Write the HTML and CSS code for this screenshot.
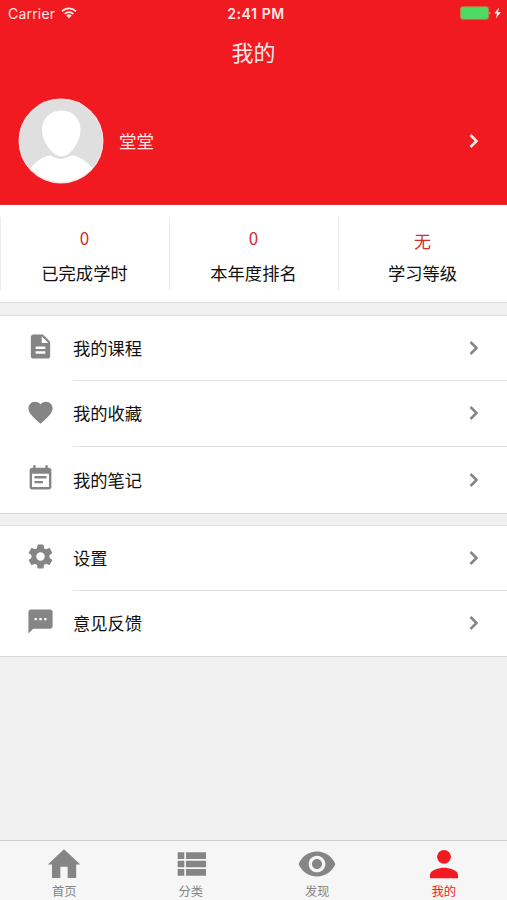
FILE: index.html
```html
<!DOCTYPE html>
<html lang="zh-CN">
<head>
<meta charset="utf-8">
<title>我的</title>
<link rel="stylesheet" href="styles.css">
</head>
<body>
<header class="header">
  <div class="status">
    <div class="carrier"><span>Carrier</span>
      <svg class="wifi" viewBox="0 0 16 12"><g fill="none" stroke="currentColor" stroke-width="1.7"><path d="M1 4.300a10 10 0 0 1 14 0"/><path d="M3.600 7a6.200 6.200 0 0 1 8.800 0"/></g><path d="M5.300 8.600a3.800 3.800 0 0 1 5.400 0L8 11.400z" fill="currentColor"/></svg>
    </div>
    <div class="time">2:41 PM</div>
    <svg class="battery" viewBox="0 0 42 14"><rect x=".5" y=".8" width="28" height="12.4" rx="2" fill="#4cd964" stroke="#b98a45" stroke-width=".8"/><path d="M29.600 5q1.800 2 0 4z" fill="#fbd0d0"/><path d="M39 1.500l-4.600 6h2.700l-1.300 5 5-6.300h-2.900z" fill="#fff"/></svg>
  </div>
  <h1 class="title">我的</h1>
  <div class="profile">
    <svg class="avatar" viewBox="0 0 86 86"><defs><clipPath id="disc"><circle cx="43" cy="43" r="42"/></clipPath></defs><circle cx="43" cy="43" r="42" fill="#dfdfdf"/><g clip-path="url(#disc)" fill="#fff"><path d="M8 75C16 66 23 58 34 57Q43 65 52 57C64 58 71 66 79 75V86H8z"/><path d="M43.500 12.500C55 12.500 62.500 21 62.500 32C62.500 44 52 58.500 43.500 58.500C35 58.500 24 44 24 32C24 21 32 12.500 43.500 12.500z"/></g><path d="M33 56.500Q43 63.500 53 56.500" fill="none" stroke="#dfdfdf" stroke-width="1.800"/><circle cx="43" cy="43" r="41.800" fill="none" stroke="#fbe3e3" stroke-width="1.300"/></svg>
    <span class="name">堂堂</span>
    <svg class="arrow" viewBox="0 0 10 16"><path d="M1.500 2l6 6-6 6"/></svg>
  </div>
</header>
<section class="stats">
  <div class="stat"><span class="value">0</span><span class="label">已完成学时</span></div>
  <div class="stat"><span class="value">0</span><span class="label">本年度排名</span></div>
  <div class="stat"><span class="value word">无</span><span class="label">学习等级</span></div>
</section>
<main>
  <section class="group">
    <div class="row"><svg class="icon" viewBox="0 0 24 24"><path d="M14 2H6c-1.100 0-1.990.900-1.990 2L4 20c0 1.100.890 2 1.990 2H18c1.100 0 2-.900 2-2V8l-6-6zm2 16H8v-2h8v2zm0-4H8v-2h8v2zm-3-5V3.500L18.500 9H13z"/></svg><div class="cell"><span>我的课程</span><svg class="arrow" viewBox="0 0 10 16"><path d="M1.500 2l6 6-6 6"/></svg></div></div>
    <div class="row"><svg class="icon" viewBox="0 0 24 24"><path d="M12 21.350l-1.450-1.320C5.400 15.360 2 12.280 2 8.500 2 5.420 4.420 3 7.500 3c1.740 0 3.410.810 4.500 2.090C13.090 3.810 14.760 3 16.500 3 19.580 3 22 5.420 22 8.500c0 3.780-3.400 6.860-8.550 11.540L12 21.350z"/></svg><div class="cell"><span>我的收藏</span><svg class="arrow" viewBox="0 0 10 16"><path d="M1.500 2l6 6-6 6"/></svg></div></div>
    <div class="row"><svg class="icon" viewBox="0 0 24 24"><path d="M17 10H7v2h10v-2zm2-7h-1V1h-2v2H8V1H6v2H5c-1.110 0-1.990.900-1.990 2L3 19c0 1.100.890 2 2 2h14c1.100 0 2-.900 2-2V5c0-1.100-.900-2-2-2zm0 16H5V8h14v11zm-5-5H7v2h7v-2z"/></svg><div class="cell"><span>我的笔记</span><svg class="arrow" viewBox="0 0 10 16"><path d="M1.500 2l6 6-6 6"/></svg></div></div>
  </section>
  <section class="group">
    <div class="row"><svg class="icon" viewBox="0 0 24 24"><path d="M19.430 12.980c.040-.320.070-.640.070-.980s-.030-.660-.070-.980l2.110-1.650c.190-.150.240-.420.120-.640l-2-3.460c-.120-.220-.390-.300-.610-.220l-2.490 1c-.520-.400-1.080-.730-1.690-.980l-.380-2.650C14.460 2.180 14.250 2 14 2h-4c-.250 0-.460.180-.490.420l-.380 2.650c-.610.250-1.170.590-1.690.980l-2.490-1c-.230-.090-.490 0-.610.220l-2 3.460c-.130.220-.070.490.120.640l2.110 1.650c-.040.320-.070.650-.070.980s.030.660.070.980l-2.110 1.650c-.190.150-.240.420-.120.640l2 3.460c.120.220.390.300.610.220l2.490-1c.520.400 1.080.730 1.690.980l.380 2.650c.030.240.240.420.490.420h4c.250 0 .460-.180.490-.420l.380-2.650c.610-.250 1.170-.590 1.690-.980l2.490 1c.230.090.490 0 .610-.220l2-3.460c.120-.220.070-.490-.120-.640l-2.110-1.650zM12 15.500c-1.930 0-3.500-1.570-3.500-3.500s1.570-3.500 3.500-3.500 3.500 1.570 3.500 3.500-1.570 3.500-3.500 3.500z"/></svg><div class="cell"><span>设置</span><svg class="arrow" viewBox="0 0 10 16"><path d="M1.500 2l6 6-6 6"/></svg></div></div>
    <div class="row"><svg class="icon" viewBox="0 0 24 24"><path d="M20 2H4c-1.100 0-1.990.900-1.990 2L2 22l4-4h14c1.100 0 2-.900 2-2V4c0-1.100-.900-2-2-2zM9 11H7V9h2v2zm4 0h-2V9h2v2zm4 0h-2V9h2v2z"/></svg><div class="cell"><span>意见反馈</span><svg class="arrow" viewBox="0 0 10 16"><path d="M1.500 2l6 6-6 6"/></svg></div></div>
  </section>
</main>
<nav class="tabs">
  <a class="tab"><svg viewBox="0 0 24 24"><path d="M9.800 20.400v-6.700h4.400v6.700h5.100V12.300h2.500L12 3.200 2.300 12.300h2.500v8.100z"/></svg><span>首页</span></a>
  <a class="tab"><svg viewBox="0 0 24 24"><path d="M4 14h4v-4H4v4zm0 5h4v-4H4v4zM4 9h4V5H4v4zm5 5h12v-4H9v4zm0 5h12v-4H9v4zM9 5v4h12V5H9z"/></svg><span>分类</span></a>
  <a class="tab"><svg viewBox="0 0 24 24"><path d="M12 4.500C7 4.500 2.730 7.610 1 12c1.730 4.390 6 7.500 11 7.500s9.270-3.110 11-7.500c-1.730-4.390-6-7.500-11-7.500zM12 17c-2.760 0-5-2.240-5-5s2.240-5 5-5 5 2.240 5 5-2.240 5-5 5zm0-8c-1.660 0-3 1.340-3 3s1.340 3 3 3 3-1.340 3-3-1.340-3-3-3z"/></svg><span>发现</span></a>
  <a class="tab active"><svg viewBox="0 0 24 24"><circle cx="12" cy="7.700" r="4.150"/><path d="M12 14.300c-2.800 0-8.400 1.400-8.400 4.200v2h16.800v-2c0-2.800-5.600-4.200-8.400-4.200z"/></svg><span>我的</span></a>
</nav>
</body>
</html>
```
FILE: styles.css
```css
* { box-sizing: border-box; }
body {
  margin: 0;
  height: 900px;
  display: flex;
  flex-direction: column;
  background: #f0f0f0;
  color: #111;
  font-family: "Noto Sans CJK SC", sans-serif;
  overflow: hidden;
}
svg { display: block; flex: none; }
.header { height: 205px; background: #f01a20; color: #fde6e6; border-bottom: 1px solid #dc3236; }
.status {
  height: 27px;
  padding: 0 5px 0 8px;
  display: grid;
  grid-template-columns: 1fr auto 1fr;
  align-items: center;
  font: 14px/27px Inter, sans-serif;
}
.carrier { display: flex; align-items: center; gap: 6px; letter-spacing: .2px; }
.wifi { width: 16px; height: 12px; margin-top: -2px; }
.time { font-size: 14px; font-weight: 600; letter-spacing: .6px; padding-left: 2px; }
.battery { width: 42px; height: 14px; justify-self: end; margin-top: -1px; }
.title { margin: 0; height: 50px; text-align: center; font-size: 22px; font-weight: 400; line-height: 48px; }
.profile { height: 127px; padding: 0 28px 0 18px; display: flex; align-items: center; }
.avatar { width: 86px; height: 86px; }
.name { flex: 1; margin-left: 15px; font-size: 17.5px; }
.arrow { width: 10px; height: 16px; fill: none; stroke: #858585; stroke-width: 2.5; }
.profile .arrow { stroke: #fff0f0; margin-top: 1px; }
.stats { height: 97px; padding: 12px 0; display: grid; grid-template-columns: repeat(3, 1fr); background: #fff; }
.stat { border-left: 1px solid #ececec; padding-right: 1px; display: flex; flex-direction: column; align-items: center; height: 73px; }
.value { height: 43px; font: 17px/41px "Noto Sans CJK SC", sans-serif; color: #d52b30; }
.value.word { line-height: 47px; }
.label { font-size: 17.3px; line-height: 26px; }
.group { margin-bottom: 11px; border-top: 1px solid #dedede; border-bottom: 1px solid #d8d8d8; background: #fff; }
main { padding-top: 12px; border-top: 1px solid #dedede; }
.row { height: 66px; display: flex; align-items: center; padding-left: 25px; }
.icon { width: 29px; height: 29px; fill: #858585; margin: 0 0 4px .5px; }
.cell { flex: 1; height: 100%; margin-left: 18.5px; padding: 0 28px 1px 0; display: flex; align-items: center; justify-content: space-between; border-bottom: 1px solid #e2e2e2; font-size: 17.3px; }
.cell span { margin-top: -1px; }
.row:first-child { height: 65px; }
.row:last-child .cell { border-bottom: 0; }
.group:last-child .row:last-child { height: 65px; }
.tabs { height: 60px; margin-top: auto; padding-left: 1px; display: grid; grid-template-columns: repeat(4, 1fr); background: #f6f6f6; border-top: 1px solid #cecece; }
.tab { display: flex; flex-direction: column; align-items: center; color: #858585; font-size: 12.3px; line-height: 18px; padding-top: 3px; }
.tab svg { width: 40px; height: 40px; fill: currentColor; margin-bottom: -2px; }
.active { color: #f01a20; }
```
